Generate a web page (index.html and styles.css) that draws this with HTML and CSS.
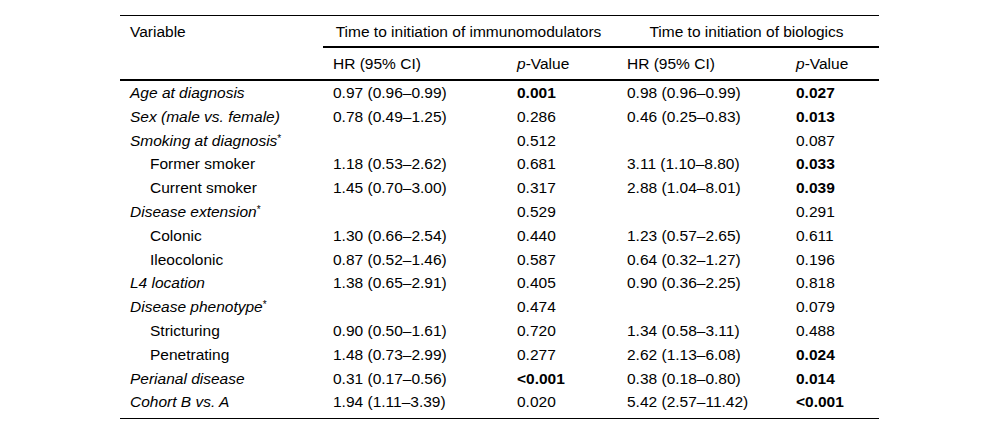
FILE: index.html
```html
<!DOCTYPE html>
<html lang="en">
<head>
<meta charset="utf-8">
<title>Cox regression</title>
<link rel="stylesheet" href="styles.css">
</head>
<body>
<div class="wrap">
<table class="tbl">
  <colgroup>
    <col class="c1"><col class="c2"><col class="c3"><col class="c4"><col class="c5">
  </colgroup>
  <thead>
    <tr class="h1">
      <th rowspan="2" class="var">Variable</th>
      <th colspan="2" class="grp">Time to initiation of immunomodulators</th>
      <th colspan="2" class="grp">Time to initiation of biologics</th>
    </tr>
    <tr class="h2">
      <th>HR (95% CI)</th>
      <th><i>p</i>-Value</th>
      <th>HR (95% CI)</th>
      <th><i>p</i>-Value</th>
    </tr>
  </thead>
  <tbody>
    <tr><td class="it">Age at diagnosis</td><td>0.97 (0.96–0.99)</td><td class="b">0.001</td><td>0.98 (0.96–0.99)</td><td class="b">0.027</td></tr>
    <tr><td class="it">Sex (male vs. female)</td><td>0.78 (0.49–1.25)</td><td>0.286</td><td>0.46 (0.25–0.83)</td><td class="b">0.013</td></tr>
    <tr><td><i>Smoking at diagnosis</i><sup>*</sup></td><td></td><td>0.512</td><td></td><td>0.087</td></tr>
    <tr><td class="ind">Former smoker</td><td>1.18 (0.53–2.62)</td><td>0.681</td><td>3.11 (1.10–8.80)</td><td class="b">0.033</td></tr>
    <tr><td class="ind">Current smoker</td><td>1.45 (0.70–3.00)</td><td>0.317</td><td>2.88 (1.04–8.01)</td><td class="b">0.039</td></tr>
    <tr><td><i>Disease extension</i><sup>*</sup></td><td></td><td>0.529</td><td></td><td>0.291</td></tr>
    <tr><td class="ind">Colonic</td><td>1.30 (0.66–2.54)</td><td>0.440</td><td>1.23 (0.57–2.65)</td><td>0.611</td></tr>
    <tr><td class="ind">Ileocolonic</td><td>0.87 (0.52–1.46)</td><td>0.587</td><td>0.64 (0.32–1.27)</td><td>0.196</td></tr>
    <tr><td class="it">L4 location</td><td>1.38 (0.65–2.91)</td><td>0.405</td><td>0.90 (0.36–2.25)</td><td>0.818</td></tr>
    <tr><td><i>Disease phenotype</i><sup>*</sup></td><td></td><td>0.474</td><td></td><td>0.079</td></tr>
    <tr><td class="ind">Stricturing</td><td>0.90 (0.50–1.61)</td><td>0.720</td><td>1.34 (0.58–3.11)</td><td>0.488</td></tr>
    <tr><td class="ind">Penetrating</td><td>1.48 (0.73–2.99)</td><td>0.277</td><td>2.62 (1.13–6.08)</td><td class="b">0.024</td></tr>
    <tr><td class="it">Perianal disease</td><td>0.31 (0.17–0.56)</td><td class="b">&lt;0.001</td><td>0.38 (0.18–0.80)</td><td class="b">0.014</td></tr>
    <tr class="last"><td class="it">Cohort B vs. A</td><td>1.94 (1.11–3.39)</td><td>0.020</td><td>5.42 (2.57–11.42)</td><td class="b">&lt;0.001</td></tr>
  </tbody>
</table>
</div>
</body>
</html>
```

FILE: styles.css
```css
html, body {
  margin: 0;
  padding: 0;
  background: #fff;
}
.wrap {
  padding: 15px 0 0 120px;
}
.tbl {
  width: 759px;
  table-layout: fixed;
  border-collapse: separate;
  border-spacing: 0;
  font-family: "Liberation Sans", Arial, sans-serif;
  font-size: 15.5px;
  line-height: 17px;
  color: #000;
}
.c1 { width: 203px; }
.c2 { width: 184px; }
.c3 { width: 110px; }
.c4 { width: 169px; }
.c5 { width: 93px; }
.tbl th {
  font-weight: normal;
  text-align: left;
  vertical-align: top;
  padding: 7px 0 7px 10px;
}
.h1 th {
  border-top: 1px solid #000;
  padding-bottom: 6px;
}
.h1 th.grp {
  text-align: center;
  padding: 7px 3px 6px 0;
  border-bottom: 2px solid #000;
}
.h1 th.var {
  border-bottom: 2px solid #000;
}
.h2 th {
  border-bottom: 2px solid #000;
}
.tbl td {
  padding: 3px 0 3.8px 10px;
  vertical-align: top;
  white-space: nowrap;
}
.tbl td.it { font-style: italic; }
.tbl td.ind { padding-left: 30px; }
.tbl td.b { font-weight: bold; }
.tbl sup {
  font-size: 10px;
  line-height: 0;
  vertical-align: 4px;
  font-style: normal;
}
.last td {
  padding-bottom: 7.8px;
  border-bottom: 1px solid #000;
}
```
